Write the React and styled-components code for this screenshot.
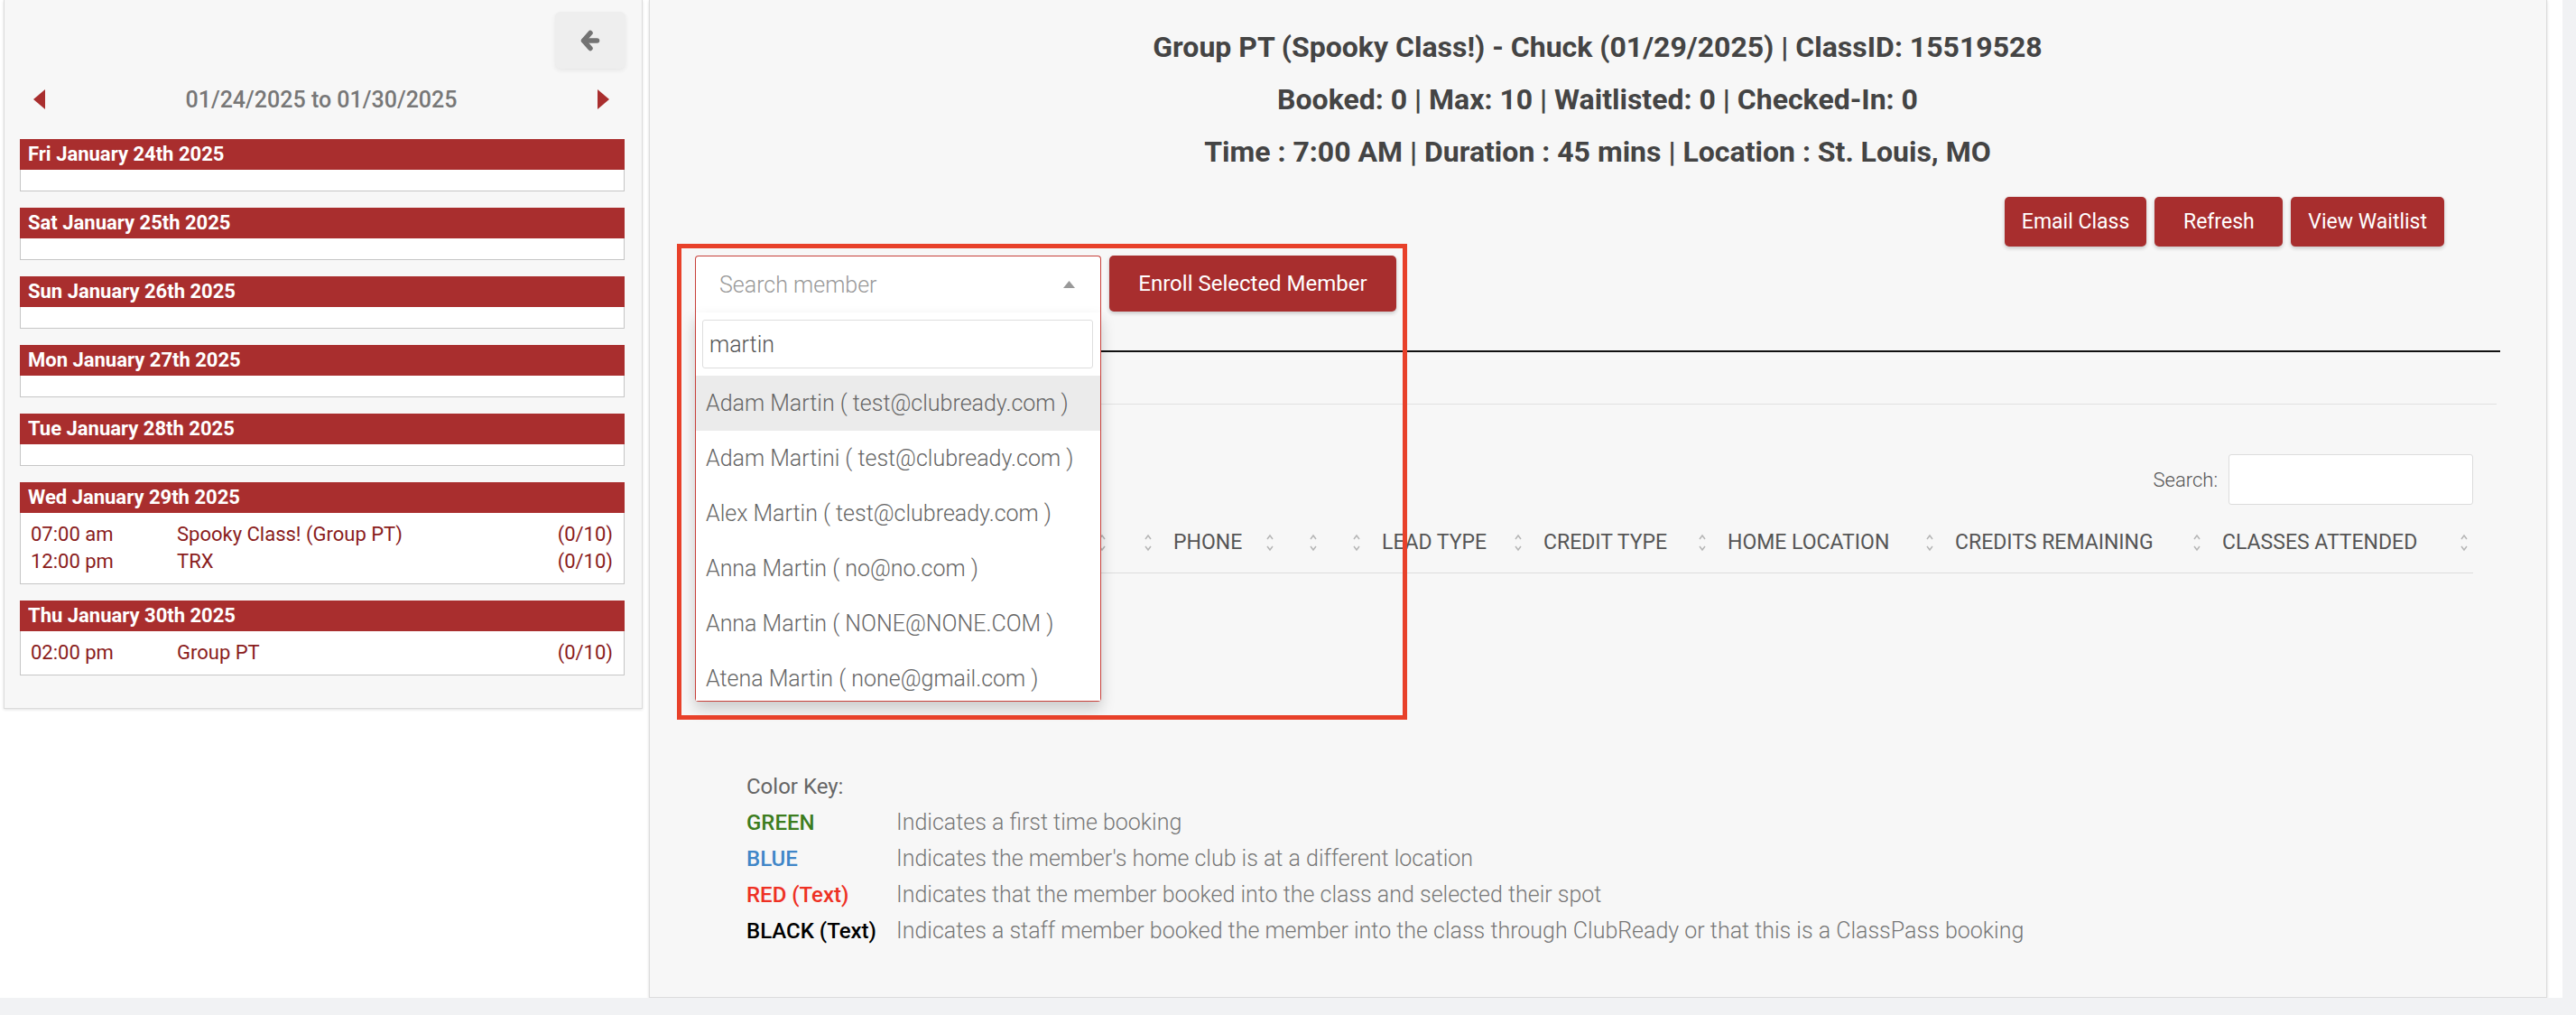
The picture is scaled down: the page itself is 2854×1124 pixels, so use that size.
import React from 'react';
import styled, { createGlobalStyle } from 'styled-components';

const GlobalStyle = createGlobalStyle`
  html, body { margin: 0; padding: 0; background: #f1f2f4; }
  body { font-family: Roboto, "Noto Sans", Arial, sans-serif; }
  *, *::before, *::after { box-sizing: border-box; }
`;

const Page = styled.div`
  width: 2839px;
  height: 1105px;
  background: #fff;
  display: flex;
  align-items: flex-start;
  gap: 7px;
  padding-left: 4px;
`;

/* ---------- Sidebar ---------- */
const Sidebar = styled.aside`
  width: 708px;
  height: 785px;
  background: #f7f7f7;
  border: 1px solid #dcdcdc;
  border-top: 0;
  box-shadow: 0 1px 3px rgba(0, 0, 0, 0.12);
  padding: 13px 19px 0 17px;
  display: flex;
  flex-direction: column;
`;

const BackRow = styled.div`
  display: flex;
  justify-content: flex-end;
`;

const BackButton = styled.button`
  width: 78px;
  height: 63px;
  margin-right: -1px;
  border: 0;
  border-radius: 6px;
  background: #eeeeee;
  box-shadow: 0 2px 5px rgba(0, 0, 0, 0.07);
  display: flex;
  align-items: center;
  justify-content: center;
  padding: 0;
`;

const DateNav = styled.div`
  margin-top: 12px;
  height: 44px;
  display: flex;
  align-items: center;
  justify-content: space-between;
  padding: 0 17px 0 15px;
`;

const DateRange = styled.div`
  font-size: 25px;
  font-weight: 500;
  color: #777;
`;

const DayList = styled.div`
  margin-top: 22px;
  display: flex;
  flex-direction: column;
  gap: 18px;
`;

const DayHeader = styled.div`
  height: 34px;
  line-height: 34px;
  background: #a92e2e;
  color: #fff;
  font-size: 22px;
  font-weight: 700;
  padding-left: 9px;
`;

const DayBody = styled.div`
  background: #fff;
  border: 1px solid #c6c6c6;
  border-top: 0;
  min-height: 24px;
  padding: ${(p) => (p.$empty ? '0' : '9px 12px 9px 11px')};
`;

const ClassRow = styled.div`
  display: grid;
  grid-template-columns: 162px 1fr auto;
  line-height: 30px;
  font-size: 22px;
  color: #8a1c1c;
`;

/* ---------- Main ---------- */
const Main = styled.main`
  position: relative;
  width: 2103px;
  height: 1105px;
  background: #f7f7f7;
  border: 1px solid #dcdcdc;
  border-top: 0;
  box-shadow: 0 1px 3px rgba(0, 0, 0, 0.15);
  padding: 23px 51px 0 50px;
`;

const TitleLine = styled.div`
  text-align: center;
  font-size: 32px;
  font-weight: 700;
  color: #444;
  line-height: 58px;
`;

const ActionBar = styled.div`
  margin-top: 21px;
  display: flex;
  justify-content: flex-end;
  gap: 9px;
  padding-right: 62px;
`;

const RedButton = styled.button`
  height: ${(p) => p.$h || 55}px;
  min-width: ${(p) => p.$minW || 0}px;
  width: ${(p) => (p.$w ? `${p.$w}px` : 'auto')};
  padding: 0 19px;
  border: 0;
  border-radius: 5px;
  background: #a82e2e;
  color: #fff;
  font-family: Roboto, sans-serif;
  font-size: ${(p) => p.$fs || 23}px;
  box-shadow: 0 2px 4px rgba(0, 0, 0, 0.2);
`;

const EnrollRow = styled.div`
  margin-top: 10px;
  display: flex;
  align-items: flex-start;
  gap: 9px;
`;

const SelectWrap = styled.div`
  position: relative;
  width: 450px;
  z-index: 5;
`;

const SelectBox = styled.div`
  height: 63px;
  border: 1px solid #c7403a;
  border-bottom: 0;
  border-radius: 4px 4px 0 0;
  background: #fff;
  display: flex;
  align-items: center;
  justify-content: space-between;
  padding: 0 28px 0 26px;
  font-size: 25px;
  font-weight: 300;
  color: #999;
`;

const Dropdown = styled.div`
  position: absolute;
  top: 100%;
  left: 0;
  right: 0;
  background: #fff;
  border: 1px solid #c7403a;
  border-top: 0;
  border-radius: 0 0 4px 4px;
  box-shadow: 0 8px 16px rgba(0, 0, 0, 0.18);
`;

const SearchBoxWrap = styled.div`
  padding: 8px 8px 8px 7px;
`;

const SearchBox = styled.div`
  height: 54px;
  border: 1px solid #dedede;
  border-radius: 3px;
  display: flex;
  align-items: center;
  padding: 0 7px;
  font-size: 25px;
  font-weight: 300;
  color: #555;
`;

const Results = styled.div`
  max-height: 360px;
  overflow: hidden;
`;

const Option = styled.div`
  height: 61px;
  flex: none;
  display: flex;
  align-items: center;
  padding: 0 11px;
  font-size: 25px;
  font-weight: 300;
  color: #666;
  white-space: nowrap;
  background: ${(p) => (p.$active ? '#ebebeb' : '#fff')};
`;

const TabLine = styled.div`
  margin-top: 42px;
  height: 2px;
  background: #111;
`;

const Divider = styled.div`
  margin-top: 57px;
  margin-right: 4px;
  height: 1px;
  background: #e2e2e2;
`;

const TableArea = styled.div`
  margin-right: 30px;
`;

const SearchRow = styled.div`
  margin-top: 55px;
  display: flex;
  justify-content: flex-end;
  align-items: center;
  gap: 12px;
  font-size: 22px;
  font-weight: 300;
  color: #555;
`;

const SearchInput = styled.div`
  width: 271px;
  height: 56px;
  background: #fff;
  border: 1px solid #dcdcdc;
  border-radius: 3px;
`;

const HeaderGrid = styled.div`
  margin-top: 8px;
  height: 68px;
  display: grid;
  grid-template-columns: 80px 200px 181px 51px 135px 48px 48px 179px 204px 252px 296px 296px;
  border-bottom: 1px solid #dddddd;
`;

const HeadCell = styled.div`
  position: relative;
  display: flex;
  align-items: center;
  padding-left: 18px;
  font-size: 23px;
  color: #555;
  text-transform: uppercase;
  white-space: nowrap;
`;

const SortWrap = styled.span`
  position: absolute;
  right: 5px;
  top: 50%;
  transform: translateY(-50%);
  display: flex;
`;

const ColorKey = styled.div`
  margin-top: 216px;
  padding-left: 57px;
  line-height: 40px;
`;

const KeyTitle = styled.div`
  font-size: 24px;
  color: #666;
`;

const KeyRow = styled.div`
  display: grid;
  grid-template-columns: 166px 1fr;
`;

const KeyLabel = styled.span`
  font-size: 24px;
  font-weight: 500;
  color: ${(p) => p.$color};
  white-space: nowrap;
`;

const KeyDesc = styled.span`
  font-size: 25px;
  font-weight: 300;
  color: #777;
  white-space: nowrap;
`;

const Highlight = styled.div`
  position: absolute;
  left: 30px;
  top: 270px;
  width: 809px;
  height: 527px;
  border: 5px solid #e8412a;
  pointer-events: none;
  z-index: 10;
`;

/* ---------- Icons ---------- */
const ArrowLeft = () => (
  <svg width="22" height="24" viewBox="0 0 22 24">
    <g fill="none" stroke="#737373" strokeWidth="5.5" strokeLinecap="round" strokeLinejoin="round">
      <polyline points="11,3.5 3.5,12 11,20.5" />
      <line x1="4" y1="12" x2="18.5" y2="12" />
    </g>
  </svg>
);

const Triangle = ({ dir }) => (
  <svg width="13" height="22" viewBox="0 0 13 22">
    {dir === 'left' ? (
      <polygon points="13,0 13,22 0,11" fill="#a92e2e" />
    ) : (
      <polygon points="0,0 0,22 13,11" fill="#a92e2e" />
    )}
  </svg>
);

const SortIcon = () => (
  <SortWrap>
    <svg width="10" height="20" viewBox="0 0 10 20">
      <polyline points="2,6 5,2 8,6" fill="none" stroke="#b5b5b5" strokeWidth="1.5" />
      <polyline points="2,14 5,18 8,14" fill="none" stroke="#b5b5b5" strokeWidth="1.5" />
    </svg>
  </SortWrap>
);

const Caret = () => (
  <svg width="13" height="8" viewBox="0 0 13 8">
    <polygon points="0,8 13,8 6.5,0" fill="#999" />
  </svg>
);

/* ---------- Data ---------- */
const days = [
  { label: 'Fri January 24th 2025', classes: [] },
  { label: 'Sat January 25th 2025', classes: [] },
  { label: 'Sun January 26th 2025', classes: [] },
  { label: 'Mon January 27th 2025', classes: [] },
  { label: 'Tue January 28th 2025', classes: [] },
  {
    label: 'Wed January 29th 2025',
    classes: [
      ['07:00 am', 'Spooky Class! (Group PT)', '(0/10)'],
      ['12:00 pm', 'TRX', '(0/10)'],
    ],
  },
  { label: 'Thu January 30th 2025', classes: [['02:00 pm', 'Group PT', '(0/10)']] },
];

const members = [
  'Adam Martin ( test@clubready.com )',
  'Adam Martini ( test@clubready.com )',
  'Alex Martin ( test@clubready.com )',
  'Anna Martin ( no@no.com )',
  'Anna Martin ( NONE@NONE.COM )',
  'Atena Martin ( none@gmail.com )',
];

const columns = [
  '#', 'Member', 'Email', '', 'Phone', '', '', 'Lead Type', 'Credit Type',
  'Home Location', 'Credits Remaining', 'Classes Attended',
];

const keys = [
  ['GREEN', '#3c7d1e', 'Indicates a first time booking'],
  ['BLUE', '#3f86c8', "Indicates the member's home club is at a different location"],
  ['RED (Text)', '#ee3124', 'Indicates that the member booked into the class and selected their spot'],
  ['BLACK (Text)', '#000', 'Indicates a staff member booked the member into the class through ClubReady or that this is a ClassPass booking'],
];

export default function App() {
  return (
    <>
      <GlobalStyle />
      <Page>
        <Sidebar>
          <BackRow>
            <BackButton>
              <ArrowLeft />
            </BackButton>
          </BackRow>
          <DateNav>
            <Triangle dir="left" />
            <DateRange>01/24/2025 to 01/30/2025</DateRange>
            <Triangle dir="right" />
          </DateNav>
          <DayList>
            {days.map((d) => (
              <div key={d.label}>
                <DayHeader>{d.label}</DayHeader>
                <DayBody $empty={d.classes.length === 0}>
                  {d.classes.map((c) => (
                    <ClassRow key={c[0]}>
                      <span>{c[0]}</span>
                      <span>{c[1]}</span>
                      <span>{c[2]}</span>
                    </ClassRow>
                  ))}
                </DayBody>
              </div>
            ))}
          </DayList>
        </Sidebar>

        <Main>
          <TitleLine>Group PT (Spooky Class!) - Chuck (01/29/2025) | ClassID: 15519528</TitleLine>
          <TitleLine>Booked: 0 | Max: 10 | Waitlisted: 0 | Checked-In: 0</TitleLine>
          <TitleLine>Time : 7:00 AM | Duration : 45 mins | Location : St. Louis, MO</TitleLine>

          <ActionBar>
            <RedButton $minW={142}>Email Class</RedButton>
            <RedButton $minW={142}>Refresh</RedButton>
            <RedButton $minW={142}>View Waitlist</RedButton>
          </ActionBar>

          <EnrollRow>
            <SelectWrap>
              <SelectBox>
                <span>Search member</span>
                <Caret />
              </SelectBox>
              <Dropdown>
                <SearchBoxWrap>
                  <SearchBox>martin</SearchBox>
                </SearchBoxWrap>
                <Results>
                  {members.map((m, i) => (
                    <Option key={m + i} $active={i === 0}>{m}</Option>
                  ))}
                </Results>
              </Dropdown>
            </SelectWrap>
            <RedButton $h={62} $fs={24} $w={318}>Enroll Selected Member</RedButton>
          </EnrollRow>

          <TabLine />
          <Divider />

          <TableArea>
            <SearchRow>
              <span>Search:</span>
              <SearchInput />
            </SearchRow>
            <HeaderGrid>
              {columns.map((c, i) => (
                <HeadCell key={i}>
                  {c}
                  <SortIcon />
                </HeadCell>
              ))}
            </HeaderGrid>
          </TableArea>

          <ColorKey>
            <KeyTitle>Color Key:</KeyTitle>
            {keys.map(([label, color, desc]) => (
              <KeyRow key={label}>
                <KeyLabel $color={color}>{label}</KeyLabel>
                <KeyDesc>{desc}</KeyDesc>
              </KeyRow>
            ))}
          </ColorKey>

          <Highlight />
        </Main>
      </Page>
    </>
  );
}
